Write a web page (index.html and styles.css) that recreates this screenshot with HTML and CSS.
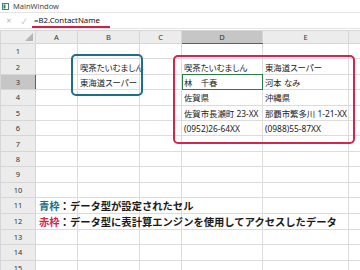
FILE: index.html
```html
<!DOCTYPE html>
<html lang="ja">
<head>
    <meta charset="UTF-8">
    <title>MainWindow</title>
    <link rel="stylesheet" href="styles.css">
</head>
<body>
    <div class="titlebar">
        <svg class="app-icon" width="7" height="7" viewBox="0 0 7 7">
            <rect x="0.5" y="0.5" width="6" height="6" fill="#fff" stroke="#4a7a8c"/>
            <rect x="1.5" y="1.5" width="2" height="4" fill="#2f8a5a"/>
        </svg>
        <span>MainWindow</span>
    </div>
    <div class="formulabar">
        <span class="fx-btn">✕</span>
        <span class="fx-btn">✓</span>
        <span class="formula">=B2.ContactName</span>
    </div>
    <div class="sheet">
        <table class="grid">
            <colgroup>
                <col class="c-hdr"><col class="c-a"><col class="c-b"><col class="c-c"><col class="c-d"><col class="c-e"><col class="c-f">
            </colgroup>
            <tr class="head">
                <th class="corner"><span class="tri"></span></th>
                <th>A</th><th>B</th><th>C</th><th class="sel-col">D</th><th>E</th><th></th>
            </tr>
            <tr><th>1</th><td></td><td></td><td></td><td></td><td></td><td></td></tr>
            <tr><th>2</th><td></td><td>喫茶たいむましん</td><td></td><td>喫茶たいむましん</td><td>東海道スーパー</td><td></td></tr>
            <tr><th class="sel-row">3</th><td></td><td>東海道スーパー</td><td></td><td class="active">林　千春</td><td>河本 なみ</td><td></td></tr>
            <tr><th>4</th><td></td><td></td><td></td><td>佐賀県</td><td>沖縄県</td><td></td></tr>
            <tr><th>5</th><td></td><td></td><td></td><td>佐賀市長瀬町 23-XX</td><td>那覇市繁多川 1-21-XX</td><td></td></tr>
            <tr><th>6</th><td></td><td></td><td></td><td>(0952)26-64XX</td><td>(0988)55-87XX</td><td></td></tr>
            <tr><th>7</th><td></td><td></td><td></td><td></td><td></td><td></td></tr>
            <tr><th>8</th><td></td><td></td><td></td><td></td><td></td><td></td></tr>
            <tr><th>9</th><td></td><td></td><td></td><td></td><td></td><td></td></tr>
            <tr><th>10</th><td></td><td></td><td></td><td></td><td></td><td></td></tr>
            <tr><th>11</th><td class="note"><span class="blue">青枠</span>：データ型が設定されたセル</td><td></td><td></td><td></td><td></td><td></td></tr>
            <tr><th>12</th><td class="note"><span class="red">赤枠</span>：データ型に表計算エンジンを使用してアクセスしたデータ</td><td></td><td></td><td></td><td></td><td></td></tr>
            <tr><th>13</th><td></td><td></td><td></td><td></td><td></td><td></td></tr>
            <tr><th>14</th><td></td><td></td><td></td><td></td><td></td><td></td></tr>
            <tr><th>15</th><td></td><td></td><td></td><td></td><td></td><td></td></tr>
        </table>
        <div class="frame frame-blue"></div>
        <div class="frame frame-red"></div>
    </div>
</body>
</html>
```

FILE: styles.css
```css
body {
    margin: 0;
    width: 360px;
    height: 270px;
    overflow: hidden;
    background: #fff;
    font-family: "Noto Sans", "Noto Sans CJK JP", sans-serif;
    color: #222;
}
.titlebar {
    height: 12px;
    display: flex;
    align-items: center;
    gap: 4px;
    padding-left: 2px;
    font-size: 7.5px;
    color: #444;
}
.app-icon {
    display: block;
}
.formulabar {
    height: 15px;
    display: flex;
    align-items: center;
    border-top: 1px solid #e4e4e4;
    border-bottom: 1px solid #e4e4e4;
    font-size: 7.8px;
}
.fx-btn {
    width: 12px;
    margin-left: 3px;
    text-align: center;
    color: #b8b8b8;
    font-size: 7px;
}
.formula {
    margin-left: 2px;
    padding: 0 10px 0 2px;
    height: 14px;
    line-height: 13px;
    border-bottom: 2px solid #c8234a;
    box-sizing: border-box;
    color: #111;
}
.sheet {
    position: relative;
    margin-top: 1px;
}
.grid {
    border-collapse: collapse;
    table-layout: fixed;
    width: 372px;
    font-family: "Noto Sans", "Noto Sans CJK JP", sans-serif;
    font-feature-settings: "palt";
}
.c-hdr { width: 35px; }
.c-a { width: 42px; }
.c-b { width: 62px; }
.c-c { width: 42px; }
.c-d { width: 81px; }
.c-e { width: 86px; }
.c-f { width: 24px; }
.grid th, .grid td {
    height: 14.4px;
    padding: 0;
    border: 1px solid #dcdcdc;
    white-space: nowrap;
    overflow: visible;
}
.grid th {
    background: #ececec;
    border-color: #d6d6d6;
    font-weight: normal;
    font-size: 7.5px;
    color: #333;
    text-align: center;
}
.grid tr.head th {
    height: 12px;
}
.grid td {
    font-size: 8.4px;
    padding-left: 2px;
    color: #222;
}
.corner {
    position: relative;
}
.tri {
    position: absolute;
    right: 2px;
    bottom: 2px;
    border-left: 8px solid transparent;
    border-bottom: 8px solid #b4b4b4;
}
.grid th.sel-col {
    background: #c6c6c6;
    border-bottom: 1px solid #2e7d46;
}
.grid th.sel-row {
    background: #c6c6c6;
    border-right: 1px solid #2e7d46;
}
.grid td.active {
    outline: 1px solid #2e7d46;
    outline-offset: -1px;
}
.grid td.note {
    font-size: 10.3px;
    font-weight: bold;
    padding-left: 3px;
    color: #1a1a1a;
    font-feature-settings: normal;
}
.blue {
    color: #1c6f86;
}
.red {
    color: #d0264f;
}
.frame {
    position: absolute;
    border-radius: 5px;
    box-sizing: border-box;
}
.frame-blue {
    left: 71px;
    top: 24px;
    width: 72px;
    height: 42px;
    border: 2.5px solid #1c6f86;
}
.frame-red {
    left: 173px;
    top: 25px;
    width: 182px;
    height: 89px;
    border: 2.5px solid #d0264f;
}
```
